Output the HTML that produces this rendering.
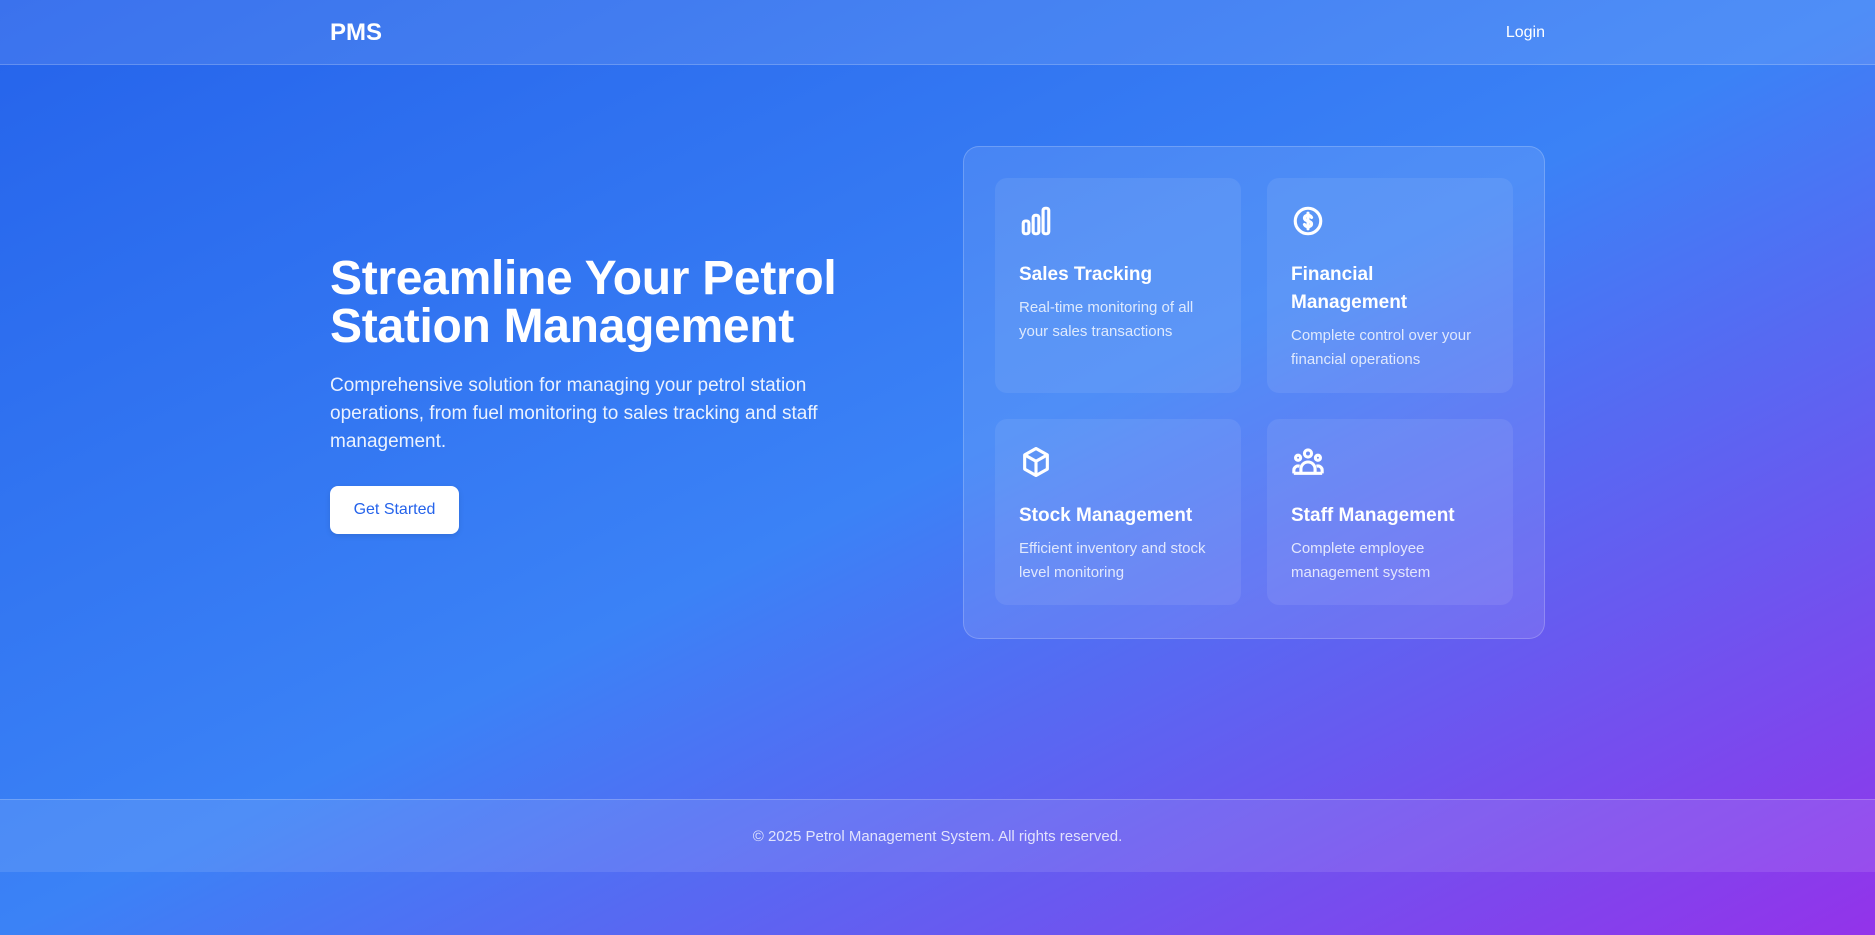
<!DOCTYPE html>
<html><head><meta charset="utf-8"><style>
*{margin:0;padding:0;box-sizing:border-box}
html,body{width:1875px;height:935px;overflow:hidden}
body{font-family:"Liberation Sans",sans-serif;color:#fff;background:linear-gradient(to bottom right,#2563eb 0%,#3b82f6 50%,#9333ea 100%);position:relative}
nav{position:absolute;left:0;top:0;width:1875px;height:65px;background:rgba(255,255,255,0.1);border-bottom:1px solid rgba(255,255,255,0.2)}
.logo{position:absolute;left:330px;top:18px;font-size:24px;font-weight:700;line-height:30px}
.login{position:absolute;right:330px;top:22px;font-size:16px;line-height:22px}
h1{position:absolute;left:330px;top:255px;font-size:48px;line-height:48px;font-weight:700;width:560px;letter-spacing:-0.3px}
p.lead{position:absolute;left:330px;top:372px;width:540px;font-size:19px;line-height:28px;color:rgba(255,255,255,0.9)}
.btn{position:absolute;left:330px;top:486px;width:129px;height:48px;background:#fff;border-radius:8px;color:#2563eb;font-size:16px;font-weight:500;display:flex;align-items:center;justify-content:center;box-shadow:0 2px 6px rgba(0,0,0,.1)}
.panel{position:absolute;left:963px;top:146px;width:582px;height:493px;background:rgba(255,255,255,0.1);border:1px solid rgba(255,255,255,0.2);border-radius:16px}
.card{position:absolute;width:246px;background:rgba(255,255,255,0.08);border-radius:12px;padding:24px}
.card svg{display:block;width:34px;height:34px;margin-top:2px}
.card h3{font-size:19px;font-weight:700;line-height:28px;margin-top:23px}
.card p{font-size:15px;line-height:24px;color:rgba(255,255,255,0.8);margin-top:7px}
footer{position:absolute;left:0;top:799px;width:1875px;height:73px;background:rgba(255,255,255,0.1);border-top:1px solid rgba(255,255,255,0.2);text-align:center;font-size:15px;line-height:73px;color:rgba(255,255,255,0.8)}
</style></head><body>
<nav><div class="logo">PMS</div><div class="login">Login</div></nav>
<h1>Streamline Your Petrol Station Management</h1>
<p class="lead">Comprehensive solution for managing your petrol station operations, from fuel monitoring to sales tracking and staff management.</p>
<div class="btn">Get Started</div>
<div class="panel">
<div class="card" style="left:31px;top:31px;height:215px">
<svg viewBox="0 0 24 24" fill="none" stroke="#fff" stroke-width="2.2" stroke-linejoin="round"><rect x="3" y="12" width="4" height="9" rx="1.5"/><rect x="10" y="8" width="4" height="13" rx="1.5"/><rect x="17" y="3" width="4" height="18" rx="1.5"/></svg>
<h3>Sales Tracking</h3><p>Real-time monitoring of all your sales transactions</p></div>
<div class="card" style="left:303px;top:31px;height:215px">
<svg viewBox="0 0 24 24" fill="none" stroke="#fff" stroke-width="2.2" stroke-linecap="round"><circle cx="12" cy="12" r="9"/><path d="M14.5 9.5c-.5-1-1.5-1.5-2.5-1.5-1.5 0-2.5.8-2.5 2s1 1.6 2.5 2 2.5.8 2.5 2-1 2-2.5 2c-1 0-2-.5-2.5-1.5M12 6.5v11"/></svg>
<h3>Financial Management</h3><p>Complete control over your financial operations</p></div>
<div class="card" style="left:31px;top:272px;height:186px">
<svg viewBox="0 0 24 24" fill="none" stroke="#fff" stroke-width="2.2" stroke-linejoin="round"><path d="M12 2.5l8 4.5v10l-8 4.5-8-4.5V7z"/><path d="M4 7l8 4.5 8-4.5M12 11.5v10"/></svg>
<h3>Stock Management</h3><p>Efficient inventory and stock level monitoring</p></div>
<div class="card" style="left:303px;top:272px;height:186px">
<svg viewBox="0 0 24 24" fill="none" stroke="#fff" stroke-width="2.2" stroke-linejoin="round"><circle cx="12" cy="6" r="2.5"/><circle cx="5" cy="9" r="1.8"/><circle cx="19" cy="9" r="1.8"/><path d="M7 20v-3a5 5 0 0 1 10 0v3zM2 20v-2a3 3 0 0 1 4-3M22 20v-2a3 3 0 0 0-4-3M2 20h20"/></svg>
<h3>Staff Management</h3><p>Complete employee management system</p></div>
</div>
<footer>© 2025 Petrol Management System. All rights reserved.</footer>
</body></html>
